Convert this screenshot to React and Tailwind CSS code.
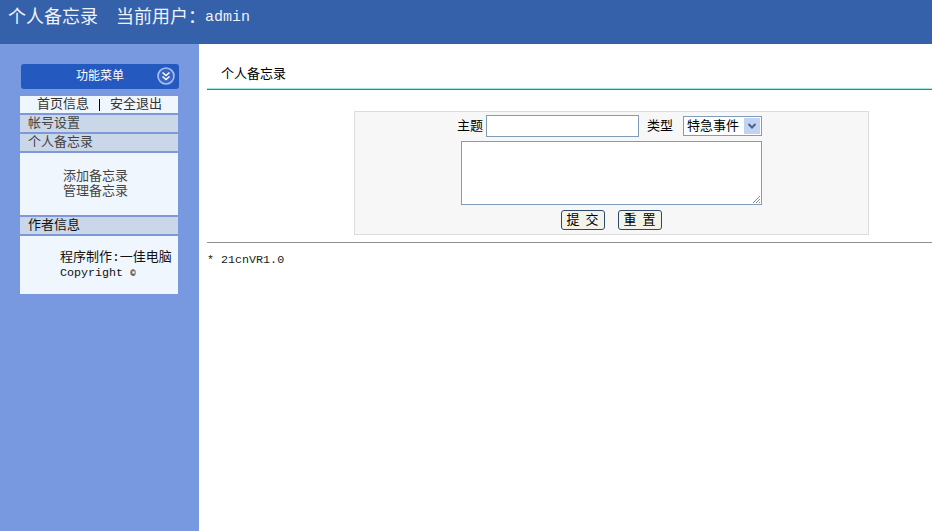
const cjk = { fontFamily: '"Liberation Mono","Noto Sans CJK SC",monospace' };

function SectionHead({ children, dark }) {
  return (
    <div className={"h-[17px] bg-[#c9d7e8] pl-[8px] text-[13px] leading-[17px] " + (dark ? "text-[#111]" : "text-[#444]")}>
      {children}
    </div>
  );
}

function Btn({ a, b }) {
  return (
    <button type="button" className="w-[44px] h-[20px] rounded-[3px] border border-[#2c4a6e] bg-[#f3f3ea] pt-[1px] text-[13px] leading-[18px] flex items-center justify-center gap-[6px]" style={cjk}>
      <span>{a}</span><span>{b}</span>
    </button>
  );
}

export default function App() {
  return (
    <div className="flex flex-col w-[932px] h-[531px] overflow-hidden bg-white text-[13px] text-black" style={cjk}>
      <header className="flex items-center h-[44px] shrink-0 bg-[#3561ab] pl-[8px] pb-[9px] text-[18px] leading-[20px] text-[#eef2fa] whitespace-pre">
        <span>个人备忘录</span>
        <span className="ml-[18px]">当前用户：</span>
        <span className="text-[15px] ml-[-1px]">admin</span>
      </header>
      <div className="flex flex-1 min-h-0">
        <aside className="w-[199px] shrink-0 bg-[#7899e0] pt-[20px]">
          <div className="ml-[21px] w-[158px] h-[25px] rounded-[3px] bg-[#2459c0] flex items-center relative">
            <span className="w-full pt-[1px] text-center text-[12px] text-white">功能菜单</span>
            <svg className="absolute right-[4px] top-[3px]" width="18" height="18" viewBox="0 0 18 18">
              <circle cx="9" cy="9" r="8" fill="#3a67c4" stroke="#a9c0ee" strokeWidth="1.6" />
              <path d="M5.5 5.5 9 8.5l3.5-3M5.5 9.5 9 12.5l3.5-3" fill="none" stroke="#fff" strokeWidth="1.6" />
            </svg>
          </div>
          <div className="ml-[20px] w-[158px] mt-[7px] flex flex-col gap-[2px] bg-[#7f98d8]">
            <div className="h-[17px] bg-[#f0f6fd] flex items-center pl-[17px] text-[13px] leading-[17px] text-[#333]">
              <span>首页信息</span>
              <span className="ml-[10px] w-[1px] h-[12px] bg-black" />
              <span className="ml-[10px]">安全退出</span>
            </div>
            <SectionHead>帐号设置</SectionHead>
            <SectionHead>个人备忘录</SectionHead>
            <div className="h-[62px] bg-[#f0f6fd] pl-[43px] pt-[16px] text-[13px] leading-[15px] text-[#444]">
              <div>添加备忘录</div>
              <div>管理备忘录</div>
            </div>
            <SectionHead dark>作者信息</SectionHead>
            <div className="h-[58px] bg-[#f0f6fd] pl-[40px] pt-[14px] text-[13px] leading-[15px] text-[#111] whitespace-nowrap">
              <div>程序制作:一佳电脑</div>
              <div className="pt-[1px] text-[11.7px]">Copyright <span className="text-[9px] font-bold">©</span></div>
            </div>
          </div>
        </aside>
        <main className="flex-1 min-w-0 pl-[8px]">
          <div className="h-[44px] pl-[14px] pt-[22px] text-[13px] leading-[18px]">
            个人备忘录
          </div>
          <div className="h-[1px] bg-[#9fe8e8]" />
          <div className="h-[1px] bg-[#1f8fa8]" />
          <form className="ml-[147px] mt-[21px] w-[515px] h-[124px] border border-[#dcdcdc] bg-[#f7f7f7] flex flex-col items-center pt-[3px]">
            <div className="flex items-center h-[22px] w-full pl-[102px] text-[13px]">
              <span className="pt-[1px]">主题</span>
              <span className="ml-[3px] w-[153px] h-[22px] border border-[#7f9db9] bg-white" />
              <span className="ml-[8px] pt-[1px]">类型</span>
              <span className="ml-[10px] w-[79px] h-[20px] border border-[#7f9db9] bg-white flex items-center justify-between pl-[3px] pr-[1px] text-[13px]">
                <span className="pt-[1px]">特急事件</span>
                <span className="w-[16px] h-[16px] bg-[#c1d2f5] flex items-center justify-center">
                  <svg width="10" height="8" viewBox="0 0 10 8"><path d="M1.5 2 5 5.5 8.5 2" fill="none" stroke="#4d6185" strokeWidth="2" /></svg>
                </span>
              </span>
            </div>
            <div className="relative mt-[4px] ml-[-1px] w-[301px] h-[64px] border border-[#7f9db9] bg-white">
              <svg className="absolute right-0 bottom-0" width="10" height="10" viewBox="0 0 10 10">
                <path d="M9 2 2 9M9 5 5 9M9 8 8 9" stroke="#888" strokeWidth="1" />
              </svg>
            </div>
            <div className="flex gap-[13px] mt-[5px] ml-[-1px]">
              <Btn a="提" b="交" />
              <Btn a="重" b="置" />
            </div>
          </form>
          <div className="mt-[7px] border-t-[1px] border-[#8f8f8f]" />
          <div className="mt-[10px] text-[11.7px] leading-[15px] text-[#222]">* 21cnVR1.0</div>
        </main>
      </div>
    </div>
  );
}
